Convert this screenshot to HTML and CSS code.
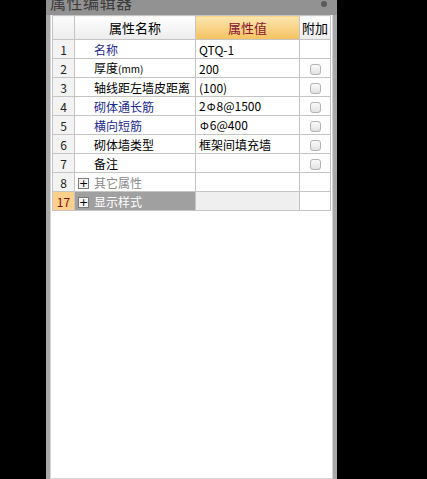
FILE: index.html
```html
<!DOCTYPE html>
<html lang="zh">
<head>
  <meta charset="UTF-8" />
  <title>属性编辑器</title>
  <link rel="stylesheet" href="styles.css">
</head>
<body>
  <div class="panel">
    <div class="titulo">
      <span class="titulo-texto">属性编辑器</span>
      <span class="punto"></span>
    </div>
    <div class="cuerpo">
      <table class="props">
        <colgroup>
          <col class="c-num"><col class="c-name"><col class="c-val"><col class="c-add">
        </colgroup>
        <thead>
          <tr>
            <th class="num"></th>
            <th class="h-name">属性名称</th>
            <th class="h-val">属性值</th>
            <th class="h-add">附加</th>
          </tr>
        </thead>
        <tbody>
          <tr><td class="num">1</td><td class="name blue">名称</td><td class="val">QTQ-1</td><td class="add"></td></tr>
          <tr><td class="num">2</td><td class="name">厚度<span class="unit">(mm)</span></td><td class="val">200</td><td class="add"><span class="chk"></span></td></tr>
          <tr><td class="num">3</td><td class="name">轴线距左墙皮距离</td><td class="val">(100)</td><td class="add"><span class="chk"></span></td></tr>
          <tr><td class="num">4</td><td class="name blue">砌体通长筋</td><td class="val">2<span class="phi">Φ</span>8@1500</td><td class="add"><span class="chk"></span></td></tr>
          <tr><td class="num">5</td><td class="name blue">横向短筋</td><td class="val"><span class="phi">Φ</span>6@400</td><td class="add"><span class="chk"></span></td></tr>
          <tr><td class="num">6</td><td class="name">砌体墙类型</td><td class="val">框架间填充墙</td><td class="add"><span class="chk"></span></td></tr>
          <tr><td class="num">7</td><td class="name">备注</td><td class="val"></td><td class="add"><span class="chk"></span></td></tr>
          <tr class="grupo"><td class="num">8</td><td class="name gris"><span class="mas">+</span>其它属性</td><td class="val"></td><td class="add"></td></tr>
          <tr class="grupo activo"><td class="num">17</td><td class="name"><span class="mas">+</span>显示样式</td><td class="val"></td><td class="add"></td></tr>
        </tbody>
      </table>
    </div>
  </div>
</body>
</html>
```

FILE: styles.css
```css
/* ===== Base ===== */
* { margin:0; padding:0; box-sizing:border-box; }
html, body { height:100%; overflow:hidden; }
body {
  background:#000;
  font-family:"Noto Sans CJK SC", "Liberation Sans", sans-serif;
  font-size:12px; color:#000;
}

/* ===== Panel ===== */
.panel {
  margin-left:46px; width:291px; height:479px;
  background:#a9a9a9;
  display:flex; flex-direction:column;
  padding:0 4px 0 4px;
}
.titulo {
  height:15px; flex:none; overflow:hidden;
  background:#929292; margin:0 -4px;
  display:flex; justify-content:space-between;
  padding:0 10px 0 4px;
}
.titulo-texto {
  font-size:16px; color:#3c3c3c; line-height:16px;
  margin-top:-6px; letter-spacing:0.5px;
}
.punto {
  width:6px; height:6px; border-radius:50%;
  background:#5a5a5a; margin-top:1px;
}
.cuerpo {
  flex:1; background:#fff;
  border:1px solid #d4d4d4; border-top:none;
  padding:0 0 0 1px;
}

/* ===== Tabla ===== */
.props {
  border-collapse:collapse; table-layout:fixed;
  width:278px;
}
.c-num { width:22px; }
.c-name { width:121px; }
.c-val { width:104px; }
.c-add { width:31px; }

.props th, .props td {
  border:1px solid #c4c4c4;
  white-space:nowrap; overflow:hidden;
}
.props th {
  height:24px; font-weight:normal; font-size:13px;
  background:linear-gradient(#ffffff, #ececec);
}
.props th.h-val {
  background:linear-gradient(#fde6b0, #f4c261);
  color:#8a1530;
}
.props td { height:19px; line-height:17px; }

.num { text-align:center; background:#f3f3f3; color:#222; }
.props th.num { background:linear-gradient(#fbfbfb, #ededed); }
.name { padding-left:19px; }
.name.blue { color:#1e2a8c; }
.name.gris { color:#8a8a8a; }
.val { padding-left:3px; }
.unit { font-size:10px; }
.phi { font-size:11px; margin:0 1px; }
.add { text-align:center; }

.chk {
  display:inline-block; width:11px; height:11px;
  border:1px solid #b4b4b4; border-radius:3px;
  background:linear-gradient(#fafafa, #e2e2e2);
  vertical-align:middle; margin-top:-2px;
}

/* ===== Grupos ===== */
.grupo .name { padding-left:3px; }
.mas {
  display:inline-block; width:11px; height:11px;
  border:1px solid #7a7a7a; background:#f4f4f4;
  color:#000; font-size:11px; line-height:9px; text-align:center;
  font-family:"DejaVu Sans", sans-serif;
  vertical-align:middle; margin:-2px 5px 0 0;
}
.activo .num { background:#fdd08c; color:#7a1010; }
.activo .name { background:#a0a0a0; color:#fff; }
.activo .val { background:#efefef; }
```
